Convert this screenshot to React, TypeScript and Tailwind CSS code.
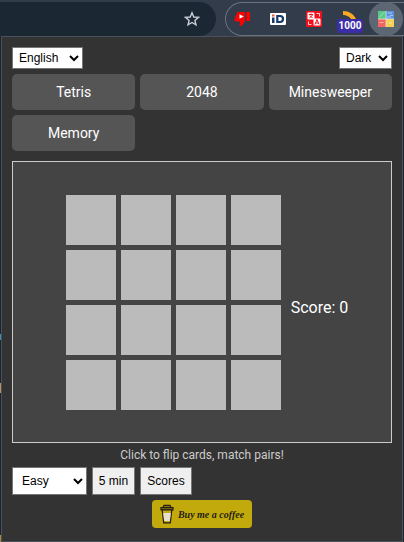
import { useState } from "react";

const GAMES = ["Tetris", "2048", "Minesweeper", "Memory"];

function BrowserBar() {
  return (
    <header className="flex h-9 items-stretch justify-between bg-[#323c4b] pt-[2px]">
      <div className="flex flex-1 items-center justify-end rounded-r-full bg-[#1c2734] pr-4">
        <button aria-label="Bookmark">
          <svg width="16" height="16" viewBox="0 0 16 16" fill="none" stroke="#c8ced6" strokeWidth="1.4">
            <path d="M8 1.8 9.8 6l4.6.4-3.5 3 1.1 4.5L8 11.5l-4 2.4 1.1-4.5-3.5-3L6.2 6Z" />
          </svg>
        </button>
      </div>
      <div className="ml-[9px] flex w-[179px] items-center rounded-l-full border border-r-0 border-[#6c737d]">
        <button aria-label="Dislikes" className="flex w-[34px] justify-center pr-[2px]">
          <svg width="17" height="16" viewBox="0 0 17 16">
            <path d="M3.500 1H11v9l-3.500 5.200-2-1 .7-3.700H1.300L.3 8.500Z" fill="#f00" />
            <path d="M12.500 1H16v9h-3.500Z" fill="#f00" />
            <path d="m5.500 3.300 4.300 2.200-4.300 2.300Z" fill="#fff" />
          </svg>
        </button>
        <button aria-label="iD" className="flex w-9 justify-center">
          <svg width="16" height="16" viewBox="0 0 16 16">
            <rect y="2" width="16" height="12" rx="1" fill="#fff" />
            <path d="M2 6.500h2.500V12H2Z" fill="#173a6b" />
            <path d="M2 3.500h2.500v2H2Z" fill="#e9572b" />
            <path d="M7.300 5H10a2.900 2.900 0 0 1 0 6H7.300Z" fill="none" stroke="#173a6b" strokeWidth="2.200" />
          </svg>
        </button>
        <button aria-label="Translate" className="flex w-9 justify-center">
          <svg width="16" height="16" viewBox="0 0 16 16">
            <rect width="16" height="16" rx="1" fill="#f0101c" />
            <rect x="1.500" y="1.500" width="7" height="7" rx="1" fill="#fff" />
            <rect x="7.500" y="7.500" width="7" height="7" rx="1" fill="#fff" />
            <path d="M3 3.500h4M5 2.500v1M3.500 7 6.500 4M4 4.500l2.500 2.500M9 13.500l2-5 2 5M10 12h2" stroke="#f0101c" fill="none" />
            <path d="M10.500 2.500h3v3M2.500 10.500v3h3" stroke="#fff" strokeOpacity=".8" fill="none" />
          </svg>
        </button>
        <button aria-label="Feed" className="flex h-full w-9 flex-col items-center pt-2">
          <svg width="16" height="8" viewBox="0 0 16 8" className="shrink-0">
            <path d="M1 0c6 0 11 3 13 8H9C8 6 4 4 1 4Z" fill="#f9a825" />
          </svg>
          <span className="h-[14px] w-[26px] rounded-[3px] bg-[#3b2da8] text-center font-['Roboto',sans-serif] text-[10px] leading-[14px] font-bold text-white">
            1000
          </span>
        </button>
        <button aria-label="Mini games" className="flex size-9 shrink-0 items-center justify-center">
          <span className="flex size-[34px] items-center justify-center rounded-full bg-[#5d6773]">
            <svg width="16" height="16" viewBox="0 0 16 16">
              <path d="M0 0h8v8H0Z" fill="#58c987" />
              <path d="M8 0h8v8H8Z" fill="#5a93e4" />
              <path d="M0 8h8v8H0Z" fill="#f26661" />
              <path d="M8 8h8v8H8Z" fill="#f3d152" />
              <path d="M6 1.500 1.500 6M10 2h4M12 4.500h3M9 6h4M1.500 11.500h4M11 12h3" stroke="#fff" strokeOpacity=".5" fill="none" />
              <path d="M8 0v16M0 8h16" stroke="#e6ebe6" strokeOpacity=".75" />
            </svg>
          </span>
        </button>
      </div>
    </header>
  );
}

function PageEdge() {
  return (
    <div aria-hidden="true" className="flex w-px flex-col justify-between">
      <span className="mt-[298px] h-[6px] bg-[#3f8fb0]" />
      <span className="h-[10px] bg-[#b8935f]" />
      <span className="mt-[100px] h-[7px] bg-[#a98a3c]" />
    </div>
  );
}

function CoffeeCup() {
  return (
    <svg width="14" height="20" viewBox="0 0 14 20" fill="none" stroke="#231d12" strokeWidth="1.200">
      <path d="M3 3.500 4 1.300h6l1 2.200" fill="#8d7a16" />
      <path d="M1 3.700h12v2.200H1Z" fill="#8d7a16" />
      <path d="m2.200 6 1.500 12.800h6.600L11.800 6Z" fill="#c3aa14" />
      <path d="m3.200 9 1 8h5.600l1-8Z" fill="#e5e0d0" stroke="none" />
    </svg>
  );
}

export default function App() {
  const [flipped, setFlipped] = useState<number[]>([]);
  const control = "h-7 border border-[#767676] font-['Liberation_Sans',Arial,sans-serif] text-xs text-black";
  const picker = "h-[22px] border border-[#767676] bg-white px-[2px] font-['Liberation_Sans',Arial,sans-serif] text-xs text-black";

  return (
    <div className="bg-[#1c2430] font-['Roboto',sans-serif]">
      <BrowserBar />
      <div className="flex pr-px">
        <PageEdge />
        <main className="min-w-0 flex-1 border border-[#4a505a] bg-[#333] px-[10px] pt-[10px] pb-[13px] text-white">
          <div className="flex justify-between">
            <select aria-label="Language" className={`${picker} w-[71px]`}>
              <option>English</option>
            </select>
            <select aria-label="Theme" className={`${picker} w-[53px]`}>
              <option>Dark</option>
            </select>
          </div>

          <nav className="mt-[5px] grid grid-cols-3 gap-[5px]">
            {GAMES.map((game) => (
              <button key={game} className="h-9 rounded-[5px] bg-[#555] text-sm">
                {game}
              </button>
            ))}
          </nav>

          <section className="mt-[10px] flex items-center justify-center gap-[10px] border border-[#ccc] bg-[#444] pt-[33px] pb-8 pl-[10px]">
            <div className="grid grid-cols-4 gap-[5px]">
              {Array.from({ length: 16 }, (_, i) => (
                <button
                  key={i}
                  aria-label={`Card ${i + 1}`}
                  onClick={() => setFlipped([...flipped, i])}
                  className="size-[50px] bg-[#bbb]"
                />
              ))}
            </div>
            <p className="pt-[10px] text-base">Score: 0</p>
          </section>

          <p className="mt-1 text-center text-xs text-[#ccc]">Click to flip cards, match pairs!</p>

          <div className="mt-1 flex gap-[5px]">
            <select aria-label="Difficulty" className={`${control} w-[75px] bg-white px-[5px]`}>
              <option>Easy</option>
            </select>
            <button className={`${control} w-[43px] bg-[#efefef]`}>5 min</button>
            <button className={`${control} w-[52px] bg-[#efefef]`}>Scores</button>
          </div>

          <a href="#coffee" className="mx-auto mt-[5px] flex h-7 w-[100px] items-center justify-center gap-1 rounded-[4px] bg-[#c3aa0c] text-[#231d12]">
            <CoffeeCup />
            <span className="font-['Liberation_Serif',cursive] text-[10px] font-bold italic">Buy me a coffee</span>
          </a>
        </main>
      </div>
    </div>
  );
}
